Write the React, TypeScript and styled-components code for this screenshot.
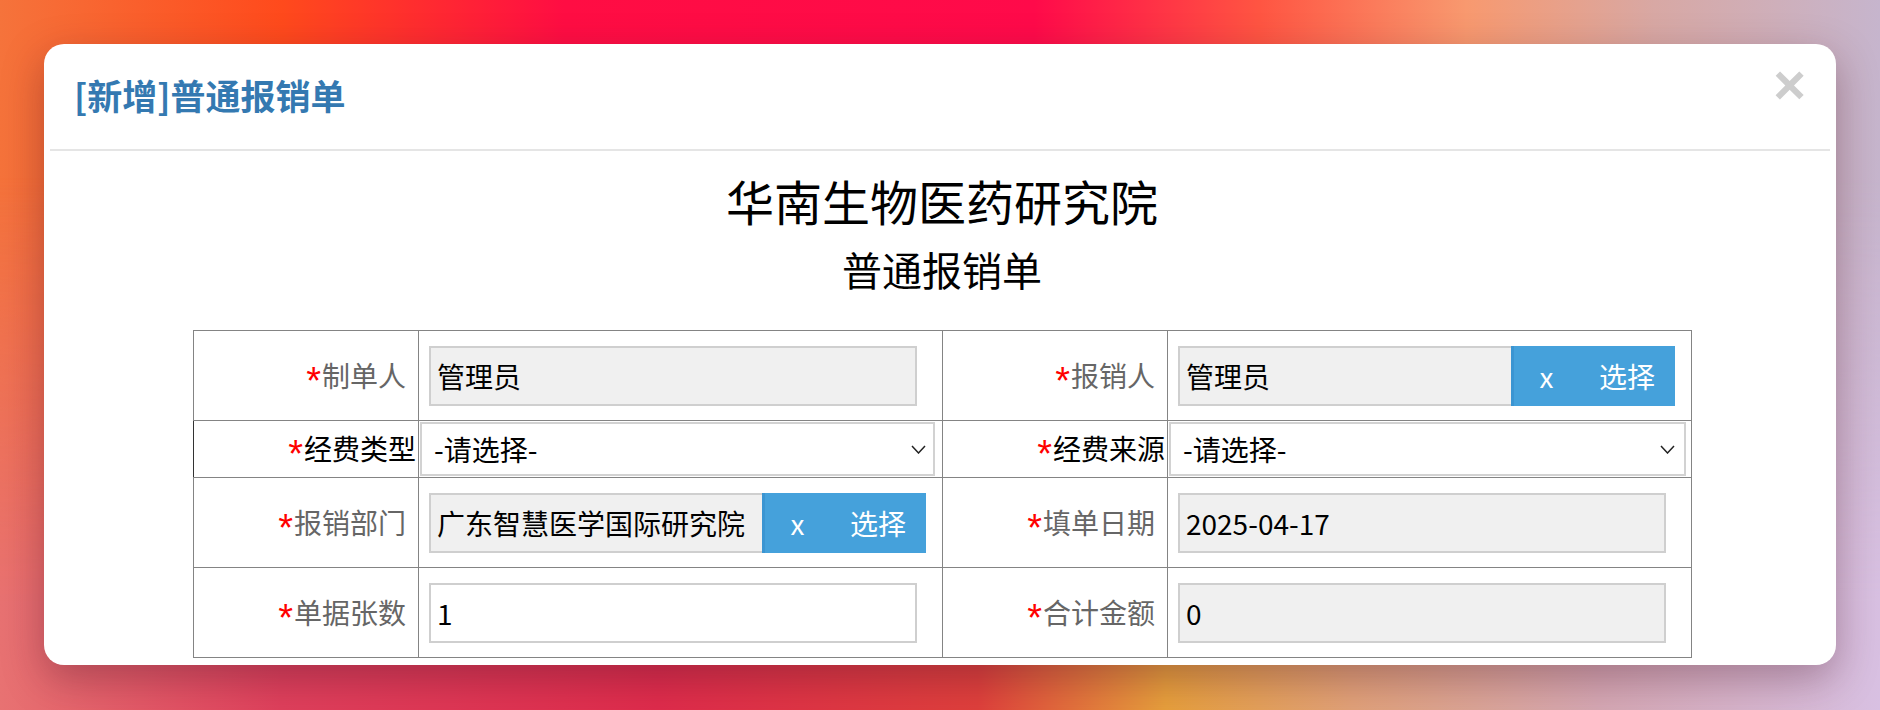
import React from 'react';
import styled, { createGlobalStyle } from 'styled-components';

const Global = createGlobalStyle`
  html, body { margin: 0; padding: 0; }
  body {
    font-family: "Noto Sans CJK SC", "Noto Sans", sans-serif;
    overflow: hidden;
  }
  * { box-sizing: border-box; }
`;

const Backdrop = styled.div`
  position: relative;
  height: 710px;
  padding: 44px 44px 45px;
  display: flex;
  background: linear-gradient(
    to right,
    #f5733b 0%,
    #ff4a1c 15%,
    #ff0d43 30%,
    #ff0a4a 55%,
    #ff5542 67%,
    #f8996f 78%,
    #d8a8a4 88%,
    #c6b5cd 100%
  );
  &::before {
    content: "";
    position: absolute;
    inset: 0;
    background: linear-gradient(
      to right,
      #e87272 0%,
      #e0405c 15%,
      #e02c4c 35%,
      #e0403c 52%,
      #e8a03c 62%,
      #e2a27a 72%,
      #d6a8b4 85%,
      #d8c0e2 100%
    );
    -webkit-mask-image: linear-gradient(to bottom, transparent 25%, black 85%);
    mask-image: linear-gradient(to bottom, transparent 25%, black 85%);
  }
`;

const Dialog = styled.div`
  position: relative;
  z-index: 1;
  flex: 1;
  display: flex;
  flex-direction: column;
  background: #fff;
  border-radius: 20px;
  overflow: hidden;
  padding: 0 6px;
  box-shadow: 0 14px 40px rgba(70, 20, 40, 0.35);
`;

const Header = styled.div`
  flex: none;
  height: 107px;
  display: flex;
  align-items: center;
  justify-content: space-between;
  padding: 0 24px 4px 24px;
  border-bottom: 2px solid #e5e5e5;
`;

const HeaderTitle = styled.h4`
  margin: 0;
  font-size: 35px;
  line-height: 1;
  font-weight: 700;
  color: #3479b1;
`;

const CloseButton = styled.button`
  border: none;
  background: none;
  padding: 0;
  margin-top: -20px;
  font-family: "Liberation Sans", Arial, sans-serif;
  font-weight: 700;
  font-size: 56px;
  line-height: 1;
  color: #cdcdcd;
  cursor: pointer;
`;

const Body = styled.div`
  flex: 1;
  padding: 21px 139px 0 143px;
`;

const OrgTitle = styled.h1`
  margin: 0;
  font-size: 48px;
  line-height: 1.2;
  font-weight: 400;
  text-align: center;
  color: #000;
`;

const FormTitle = styled.h2`
  margin: 15px 0 0;
  font-size: 40px;
  line-height: 1.2;
  font-weight: 400;
  text-align: center;
  color: #000;
`;

const FormTable = styled.table`
  margin-top: 37px;
  width: 1498px;
  border-collapse: collapse;
  table-layout: fixed;
`;

const Col = styled.col<{ $w: number }>`
  width: ${(p) => p.$w}px;
`;

const LabelCell = styled.td<{ $dark?: boolean }>`
  border: 1px solid #848484;
  ${(p) => (p.$dark ? 'border-left-color: #333;' : '')}
  padding: ${(p) => (p.$dark ? '1px 2px 1px 0' : '15px 12px 14px 0')};
  text-align: right;
  vertical-align: middle;
  white-space: nowrap;
  font-size: 28px;
  line-height: 1.2;
  color: ${(p) => (p.$dark ? '#000' : '#666')};
`;

const Star = styled.span`
  font-family: "Liberation Sans", Arial, sans-serif;
  font-size: 38px;
  line-height: 0;
  vertical-align: -7px;
  margin-right: 1px;
  color: #f00;
`;

const FieldCell = styled.td<{ $tight?: boolean }>`
  border: 1px solid #848484;
  padding: ${(p) => (p.$tight ? '1px 0 1px 1px' : '15px 10px 14px')};
  vertical-align: middle;
`;

const TextInput = styled.input<{ $gray?: boolean }>`
  display: block;
  width: 488px;
  height: 60px;
  border: 2px solid #cfcfcf;
  background: ${(p) => (p.$gray ? '#f0f0f0' : '#fff')};
  padding: 0 6px;
  font-family: inherit;
  font-size: 28px;
  color: #000;
  outline: none;
`;

const InputGroup = styled.div`
  display: flex;
  width: 497px;
  height: 60px;
`;

const GroupInput = styled.input`
  flex: 1;
  min-width: 0;
  height: 60px;
  border: 2px solid #cfcfcf;
  border-right: none;
  background: #f0f0f0;
  padding: 0 6px;
  font-family: inherit;
  font-size: 28px;
  color: #000;
  outline: none;
`;

const GroupButton = styled.button<{ $w: number; $edge?: boolean }>`
  flex: none;
  width: ${(p) => p.$w}px;
  height: 60px;
  border: none;
  ${(p) => (p.$edge ? 'border-left: 3px solid #3b95d2;' : '')}
  background: #45a1db;
  color: #fff;
  font-family: inherit;
  font-size: 28px;
  line-height: 1;
  padding: 0;
  cursor: pointer;
`;

const SelectWrap = styled.div<{ $w: string }>`
  position: relative;
  width: ${(p) => p.$w};
  height: 54px;
`;

const Select = styled.select`
  appearance: none;
  -webkit-appearance: none;
  display: block;
  width: 100%;
  height: 54px;
  border: 2px solid #d2d2d2;
  background: #fff;
  padding: 0 40px 0 12px;
  font-family: inherit;
  font-size: 28px;
  color: #000;
  outline: none;
`;

const Chevron = styled.svg<{ $right: number }>`
  position: absolute;
  top: 50%;
  right: ${(p) => p.$right}px;
  width: 15px;
  height: 9px;
  margin-top: -4px;
  pointer-events: none;
`;

const ChevronIcon = ({ right }: { right: number }) => (
  <Chevron $right={right} viewBox="0 0 15 9">
    <path d="M1 1 L7.5 8 L14 1" fill="none" stroke="#222" strokeWidth="1.5" />
  </Chevron>
);

const Label = ({ text, dark }: { text: string; dark?: boolean }) => (
  <LabelCell $dark={dark}>
    <Star>*</Star>
    {text}
  </LabelCell>
);

export default function App() {
  return (
    <>
      <Global />
      <Backdrop>
        <Dialog>
          <Header>
            <HeaderTitle>[新增]普通报销单</HeaderTitle>
            <CloseButton aria-label="close">×</CloseButton>
          </Header>
          <Body>
            <OrgTitle>华南生物医药研究院</OrgTitle>
            <FormTitle>普通报销单</FormTitle>
            <FormTable>
              <colgroup>
                <Col $w={225} />
                <Col $w={524} />
                <Col $w={225} />
                <Col $w={524} />
              </colgroup>
              <tbody>
                <tr>
                  <Label text="制单人" />
                  <FieldCell>
                    <TextInput $gray readOnly value="管理员" />
                  </FieldCell>
                  <Label text="报销人" />
                  <FieldCell>
                    <InputGroup>
                      <GroupInput readOnly value="管理员" />
                      <GroupButton $w={68} $edge>x</GroupButton>
                      <GroupButton $w={96}>选择</GroupButton>
                    </InputGroup>
                  </FieldCell>
                </tr>
                <tr>
                  <Label text="经费类型" dark />
                  <FieldCell $tight>
                    <SelectWrap $w="515px">
                      <Select defaultValue="">
                        <option value="">-请选择-</option>
                      </Select>
                      <ChevronIcon right={9} />
                    </SelectWrap>
                  </FieldCell>
                  <Label text="经费来源" dark />
                  <FieldCell $tight>
                    <SelectWrap $w="517px">
                      <Select defaultValue="">
                        <option value="">-请选择-</option>
                      </Select>
                      <ChevronIcon right={11} />
                    </SelectWrap>
                  </FieldCell>
                </tr>
                <tr>
                  <Label text="报销部门" />
                  <FieldCell>
                    <InputGroup>
                      <GroupInput readOnly value="广东智慧医学国际研究院" />
                      <GroupButton $w={68} $edge>x</GroupButton>
                      <GroupButton $w={96}>选择</GroupButton>
                    </InputGroup>
                  </FieldCell>
                  <Label text="填单日期" />
                  <FieldCell>
                    <TextInput $gray readOnly value="2025-04-17" />
                  </FieldCell>
                </tr>
                <tr>
                  <Label text="单据张数" />
                  <FieldCell>
                    <TextInput defaultValue="1" />
                  </FieldCell>
                  <Label text="合计金额" />
                  <FieldCell>
                    <TextInput $gray readOnly value="0" />
                  </FieldCell>
                </tr>
              </tbody>
            </FormTable>
          </Body>
        </Dialog>
      </Backdrop>
    </>
  );
}
